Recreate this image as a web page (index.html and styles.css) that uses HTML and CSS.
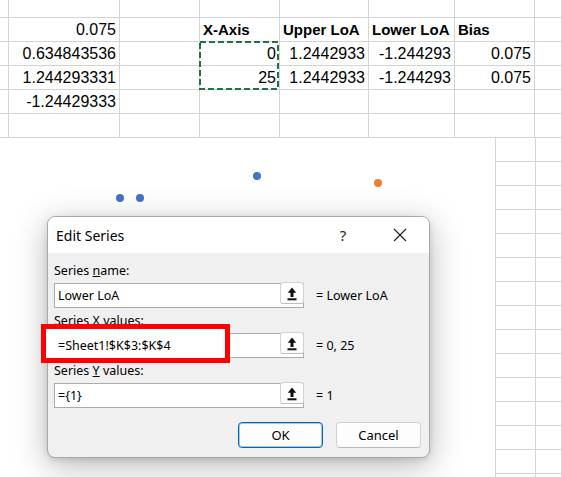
FILE: index.html
```html
<!DOCTYPE html>
<html>
<head>
<meta charset="utf-8">
<link rel="stylesheet" href="styles.css">
</head>
<body>
<div class="sheet">
  <div class="grid-top">
    <div class="c"></div><div class="c"></div><div class="c"></div><div class="c"></div><div class="c"></div><div class="c"></div><div class="c"></div><div class="c"></div>

    <div class="c"></div><div class="c num">0.075</div><div class="c"></div><div class="c hdr">X-Axis</div><div class="c hdr">Upper LoA</div><div class="c hdr">Lower LoA</div><div class="c hdr">Bias</div><div class="c"></div>

    <div class="c"></div><div class="c num">0.634843536</div><div class="c"></div><div class="c num">0</div><div class="c num">1.2442933</div><div class="c num">-1.244293</div><div class="c num">0.075</div><div class="c"></div>

    <div class="c"></div><div class="c num">1.244293331</div><div class="c"></div><div class="c num">25</div><div class="c num">1.2442933</div><div class="c num">-1.244293</div><div class="c num">0.075</div><div class="c"></div>

    <div class="c"></div><div class="c num">-1.24429333</div><div class="c"></div><div class="c"></div><div class="c"></div><div class="c"></div><div class="c"></div><div class="c"></div>

    <div class="c"></div><div class="c"></div><div class="c"></div><div class="c"></div><div class="c"></div><div class="c"></div><div class="c"></div><div class="c"></div>
  </div>
  <div class="lower">
    <div class="chart">
      <span class="dot blue" style="left:116px;top:56px"></span>
      <span class="dot blue" style="left:136px;top:56px"></span>
      <span class="dot blue" style="left:253px;top:34px"></span>
      <span class="dot orange" style="left:374px;top:41px"></span>
    </div>
    <div class="side-grid">
      <div class="c"></div><div class="c"></div>
      <div class="c"></div><div class="c"></div>
      <div class="c"></div><div class="c"></div>
      <div class="c"></div><div class="c"></div>
      <div class="c"></div><div class="c"></div>
      <div class="c"></div><div class="c"></div>
      <div class="c"></div><div class="c"></div>
      <div class="c"></div><div class="c"></div>
      <div class="c"></div><div class="c"></div>
      <div class="c"></div><div class="c"></div>
      <div class="c"></div><div class="c"></div>
      <div class="c"></div><div class="c"></div>
      <div class="c"></div><div class="c"></div>
      <div class="c"></div><div class="c"></div>
      <div class="c"></div><div class="c"></div>
    </div>
  </div>
</div>

<svg class="selection" width="80" height="49" viewBox="0 0 80 49">
  <rect x="1" y="1" width="78" height="47" fill="none" stroke="#217346" stroke-width="2" stroke-dasharray="6 3"/>
</svg>

<div class="dialog">
  <div class="titlebar">
    <div class="title">Edit Series</div>
    <div class="help">?</div>
    <div class="close">
      <svg width="14" height="14" viewBox="0 0 14 14"><path d="M1 1 L13 13 M13 1 L1 13" stroke="#1b1b1b" stroke-width="1.1" fill="none"/></svg>
    </div>
  </div>
  <div class="body">
    <div class="field">
      <div class="label">Series <u>n</u>ame:</div>
      <div class="row">
        <div class="input"><span class="text">Lower LoA</span>
          <span class="upbtn"><svg width="24" height="22" viewBox="0 0 24 22"><path d="M12 5.5 L16.2 10.8 L13.5 10.8 L13.5 15 L10.5 15 L10.5 10.8 L7.8 10.8 Z" fill="#111"/><rect x="7.5" y="16.3" width="9" height="2" fill="#111"/></svg></span>
        </div>
        <span class="eq">= Lower LoA</span>
      </div>
    </div>
    <div class="field">
      <div class="label">Series <u>X</u> values:</div>
      <div class="row">
        <div class="input"><span class="text">=Sheet1!$K$3:$K$4</span>
          <span class="upbtn"><svg width="24" height="22" viewBox="0 0 24 22"><path d="M12 5.5 L16.2 10.8 L13.5 10.8 L13.5 15 L10.5 15 L10.5 10.8 L7.8 10.8 Z" fill="#111"/><rect x="7.5" y="16.3" width="9" height="2" fill="#111"/></svg></span>
        </div>
        <span class="eq">= 0, 25</span>
      </div>
    </div>
    <div class="field">
      <div class="label">Series <u>Y</u> values:</div>
      <div class="row">
        <div class="input"><span class="text">={1}</span>
          <span class="upbtn"><svg width="24" height="22" viewBox="0 0 24 22"><path d="M12 5.5 L16.2 10.8 L13.5 10.8 L13.5 15 L10.5 15 L10.5 10.8 L7.8 10.8 Z" fill="#111"/><rect x="7.5" y="16.3" width="9" height="2" fill="#111"/></svg></span>
        </div>
        <span class="eq">= 1</span>
      </div>
    </div>
    <div class="actions">
      <div class="btn primary">OK</div>
      <div class="btn">Cancel</div>
    </div>
  </div>
</div>

<div class="annotation"></div>
</body>
</html>
```

FILE: styles.css
```css
html, body {
  margin: 0;
  padding: 0;
}
body {
  width: 562px;
  height: 477px;
  overflow: hidden;
  position: relative;
  background: #ffffff;
  font-family: "Liberation Sans", Arial, sans-serif;
  color: #000;
}
.sheet {
  display: flex;
  flex-direction: column;
}
.grid-top {
  display: grid;
  grid-template-columns: 9px 111px 80px 80px 89px 86px 80px 1fr;
  grid-template-rows: 18px repeat(5, 24px);
}
.c {
  box-sizing: border-box;
  border-right: 1px solid #d4d4d4;
  border-bottom: 1px solid #d4d4d4;
  font-size: 16px;
  line-height: 23px;
  white-space: nowrap;
  overflow: hidden;
}
.num {
  text-align: right;
  padding-right: 3px;
}
.hdr {
  font-weight: bold;
  font-size: 15px;
  padding-left: 3px;
  overflow: visible;
}
.lower {
  display: flex;
  height: 339px;
}
.chart {
  position: relative;
  width: 495px;
  height: 100%;
  background: #fff;
}
.dot {
  position: absolute;
  width: 8px;
  height: 8px;
  border-radius: 50%;
}
.blue { background: #4472c4; }
.orange { background: #ed7d31; }
.side-grid {
  flex: 1;
  display: grid;
  grid-template-columns: 40px 1fr;
  grid-auto-rows: 24px;
  border-left: 1px solid #d4d4d4;
  overflow: hidden;
}
.selection {
  position: absolute;
  left: 199px;
  top: 41px;
}
.dialog {
  position: absolute;
  left: 47px;
  top: 216px;
  width: 383px;
  box-sizing: border-box;
  background: #f0f0f0;
  border: 1px solid #a8a8a8;
  border-radius: 8px;
  box-shadow: 0 8px 34px rgba(0, 0, 0, 0.28), 0 2px 6px rgba(0, 0, 0, 0.12);
  font-family: "Noto Sans", "Open Sans", sans-serif;
  color: #1a1a1a;
}
.titlebar {
  height: 36px;
  background: #ffffff;
  border-radius: 7px 7px 0 0;
  display: flex;
  align-items: center;
  padding-left: 8px;
  padding-right: 6px;
}
.title {
  flex: 1;
  font-size: 14px;
  color: #000;
}
.help {
  width: 46px;
  text-align: center;
  font-size: 15px;
  margin-right: 11px;
  color: #222;
}
.close {
  width: 46px;
  display: flex;
  justify-content: center;
  align-items: center;
}
.close svg { display: block; }
.body {
  padding: 9px 6px 9px 6px;
  display: flex;
  flex-direction: column;
  gap: 4px;
}
.label {
  font-size: 12.5px;
  line-height: 17px;
  margin-bottom: 4px;
  color: #000;
}
.row {
  display: flex;
  align-items: center;
  gap: 12px;
}
.input {
  width: 250px;
  height: 25px;
  box-sizing: border-box;
  border: 1px solid #ababab;
  background: #fff;
  display: flex;
  align-items: center;
}
.text {
  flex: 1;
  padding-left: 3px;
  font-size: 12.5px;
  color: #000;
  white-space: nowrap;
}
.upbtn {
  align-self: flex-start;
  margin-top: -2px;
  margin-right: -1px;
  width: 24px;
  height: 22px;
  box-sizing: border-box;
  border: 1px solid #d2d2d2;
  border-bottom-color: #bdbdbd;
  border-radius: 3px;
  background: #fdfdfd;
  display: flex;
  align-items: center;
  justify-content: center;
}
.upbtn svg { display: block; flex: none; }
.eq {
  font-size: 12.5px;
  color: #000;
  white-space: nowrap;
}
.actions {
  display: flex;
  justify-content: flex-end;
  gap: 13px;
  margin-top: 10px;
  padding-right: 2px;
}
.btn {
  width: 85px;
  height: 26px;
  box-sizing: border-box;
  border: 1px solid #d0d0d0;
  border-bottom-color: #b8b8b8;
  border-radius: 4px;
  background: #fdfdfd;
  font-size: 13px;
  display: flex;
  align-items: center;
  justify-content: center;
  color: #000;
}
.primary {
  border: 1px solid #0067c0;
  box-shadow: inset 0 0 0 1px rgba(0, 103, 192, 0.35);
}
.annotation {
  position: absolute;
  left: 41px;
  top: 324px;
  width: 189px;
  height: 39px;
  box-sizing: border-box;
  border: 5px solid #ff0000;
  box-shadow: inset 9px 0 0 0 #fff, inset 0 5px 0 0 #fff, inset 0 -1px 0 0 #fff;
}
```
